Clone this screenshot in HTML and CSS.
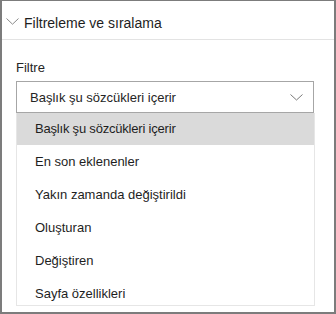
FILE: index.html
```html
<!DOCTYPE html>
<html lang="tr">
<head>
    <meta charset="UTF-8">
    <title>Filtreleme ve sıralama</title>
    <link rel="stylesheet" href="styles.css">
</head>
<body>
    <div class="panel">
        <div class="section-head">
            <svg class="chev" width="13" height="7" viewBox="0 0 13 7"><path d="M0.5 0.5 L6.5 6.2 L12.5 0.5" fill="none" stroke="#8a8a8a" stroke-width="1"/></svg>
            <span>Filtreleme ve sıralama</span>
        </div>
        <div class="section-body">
            <div class="field-label">Filtre</div>
            <div class="dropdown">
                <span>Başlık şu sözcükleri içerir</span>
                <svg class="dd-chev" width="13" height="7" viewBox="0 0 13 7"><path d="M0.5 0.5 L6.5 6 L12.5 0.5" fill="none" stroke="#7a7a7a" stroke-width="1"/></svg>
            </div>
            <ul class="options">
                <li class="selected">Başlık şu sözcükleri içerir</li>
                <li>En son eklenenler</li>
                <li>Yakın zamanda değiştirildi</li>
                <li>Oluşturan</li>
                <li>Değiştiren</li>
                <li>Sayfa özellikleri</li>
            </ul>
        </div>
    </div>
</body>
</html>
```

FILE: styles.css
```css
html, body { margin: 0; padding: 0; background: #fff; }
body { font-family: 'Liberation Sans', Arial, sans-serif; color: #252525; }
.panel { width: 336px; height: 314px; box-sizing: border-box; border: 2px solid #7c7c7c; border-top-width: 1px; overflow: hidden; }
.section-head { height: 32px; padding-top: 6px; display: flex; align-items: center; border-bottom: 1px solid #e3e3e3; font-size: 14px; color: #1e1e1e; }
.section-head .chev { margin: -4px 5px 0 4px; }
.section-body { padding: 20px 20px 0 14px; }
.field-label { font-size: 13px; line-height: 16px; margin-bottom: 5px; }
.dropdown { height: 30px; border: 1px solid #a6a6a6; display: flex; align-items: center; justify-content: space-between; padding: 0 10px 0 13px; font-size: 13px; }
.options { list-style: none; margin: 0; padding: 0; height: 192px; overflow: hidden; border: 1px solid #e6e6e6; border-top: none; margin-right: -1px; }
.options li { height: 33px; line-height: 33px; padding-left: 18px; font-size: 13px; color: #1e1e1e; }
.options li.selected { background: #dadada; height: 32px; line-height: 32px; letter-spacing: -0.2px; }
```
